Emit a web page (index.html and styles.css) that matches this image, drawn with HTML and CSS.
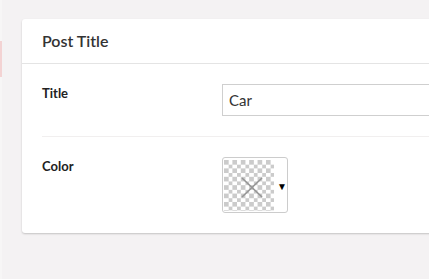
FILE: index.html
```html
<!DOCTYPE html>
<html>
<head>
<meta charset="utf-8">
<link rel="stylesheet" href="styles.css">
</head>
<body>
<div class="page">
  <div class="edge"><div class="edge-mark"></div></div>
  <div class="content">
    <div class="card">
      <div class="card-header">Post Title</div>
      <div class="row">
        <div class="label">Title</div>
        <div class="field"><div class="input">Car</div></div>
      </div>
      <div class="row row-color">
        <div class="label">Color</div>
        <div class="field">
          <div class="swatch">
            <div class="checker">
              <svg class="cross" width="22" height="21" viewBox="0 0 22 21"><path d="M1 1 L21 20 M21 1 L1 20" stroke="#969696" stroke-width="1.6" fill="none"/></svg>
            </div>
            <div class="arrow">▼</div>
          </div>
        </div>
      </div>
    </div>
  </div>
</div>
</body>
</html>
```
FILE: styles.css
```css
html, body {
  margin: 0;
  padding: 0;
  background: #f4f2f3;
  overflow: hidden;
  font-family: Lato, "Noto Sans", sans-serif;
}
.page {
  display: flex;
  width: 429px;
  height: 279px;
}
.edge {
  width: 2px;
  flex: none;
  background: #f7f6f6;
  padding-top: 41px;
}
.edge-mark {
  height: 36px;
  background: #f3d3d3;
}
.content {
  padding: 19px 0 0 20px;
  flex: none;
}
.card {
  width: 500px;
  background: #fff;
  border-radius: 3px;
  box-shadow: 0 1px 2px rgba(0,0,0,0.2);
}
.card-header {
  height: 44px;
  line-height: 44px;
  padding-left: 20px;
  font-size: 16px;
  font-weight: 600;
  color: #333;
  border-bottom: 1px solid #e4e4e4;
}
.row {
  display: flex;
  margin-left: 20px;
  padding: 20px 0 20px;
  border-bottom: 1px solid #f1efef;
}
.row-color {
  border-bottom: none;
  padding: 20px 0 20px;
}
.label {
  width: 180px;
  flex: none;
  font-size: 13px;
  font-weight: bold;
  color: #222;
  line-height: 18px;
}
.input {
  width: 260px;
  height: 30px;
  border: 1px solid #cfcfcf;
  padding-left: 6px;
  font-size: 15px;
  line-height: 30px;
  color: #333;
}
.swatch {
  width: 64px;
  height: 54px;
  border: 1px solid #cccccc;
  border-radius: 3px;
  display: flex;
  align-items: center;
  padding: 0;
}
.checker {
  width: 51px;
  height: 51px;
  margin-left: 1px;
  display: flex;
  align-items: center;
  justify-content: center;
  background-color: #fff;
  background-image: conic-gradient(#fff 25%, #cbcbcb 0 50%, #fff 0 75%, #cbcbcb 0);
  background-size: 8.4px 8.4px;
}
.cross {
  margin-top: 4px;
  margin-left: 6px;
}
.arrow {
  font-size: 10px;
  color: #000;
  margin-left: 3px;
  margin-top: 2px;
}
```
